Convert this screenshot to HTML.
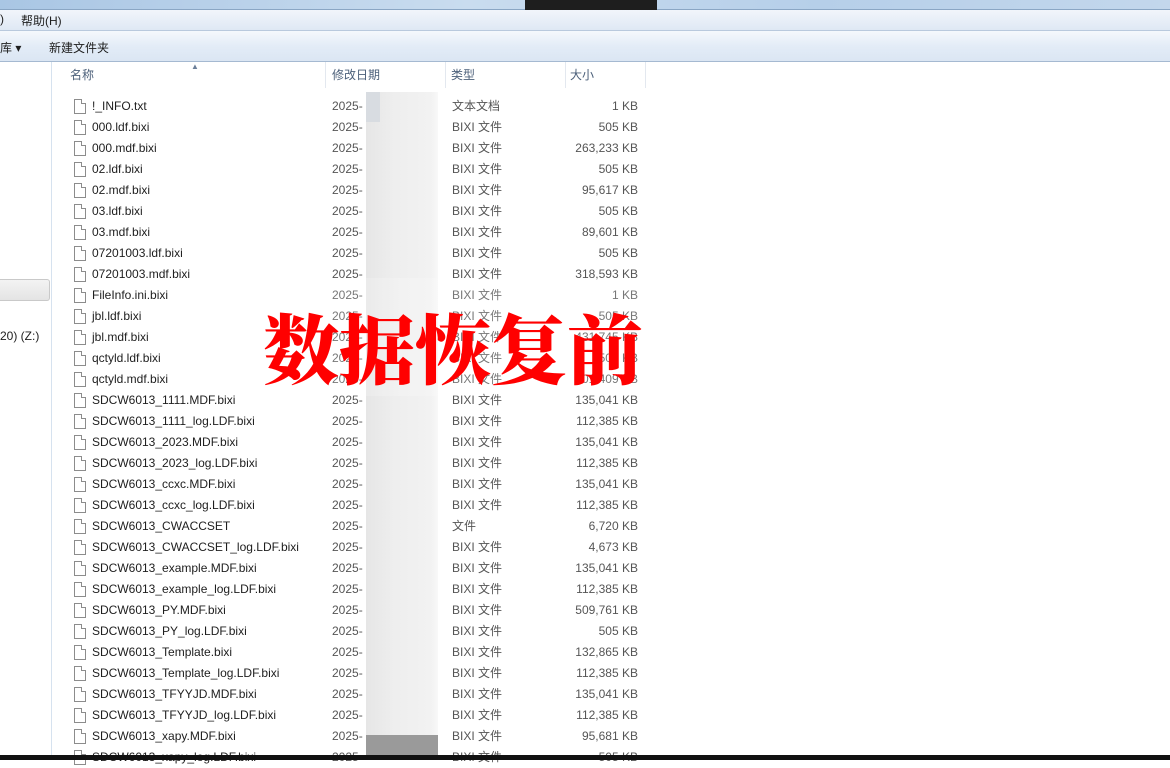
<!DOCTYPE html>
<html><head><meta charset="utf-8"><style>
*{margin:0;padding:0;box-sizing:border-box}
body{width:1170px;height:760px;overflow:hidden;background:#fff;font-family:"Liberation Sans","Noto Sans CJK SC",sans-serif;font-size:12px;color:#1e1e1e;position:relative}
.abs{position:absolute}
.title{left:0;top:0;width:1170px;height:10px;background:linear-gradient(90deg,#a9c6e4,#c9dcef 40%,#b6cfe9 70%,#c3d7ec);border-bottom:1px solid #8aa6c4}
.menu{left:0;top:10px;width:1170px;height:21px;background:linear-gradient(#f1f5fb,#dfe8f4);border-bottom:1px solid #b9c9dd}
.tool{left:0;top:31px;width:1170px;height:31px;background:linear-gradient(#f5f8fc,#e3ecf7 50%,#dbe6f3);border-bottom:1px solid #a5b9d1}
.left{left:0;top:62px;width:52px;height:698px;background:#fff;border-right:1px solid #d6e2ef}
.hdr{top:62px;height:26px;line-height:26px;color:#4c607a;border-right:1px solid #e3e8ef}
.row{left:0;height:21px;line-height:21px;width:1170px}
.row span{position:absolute;white-space:nowrap}
.ic{position:absolute;left:74px;top:3px;width:12px;height:15px;border:1px solid #8c8c8c;background:#fff}
.ic:after{content:"";position:absolute;right:-1px;top:-1px;width:4px;height:4px;background:#fff;border-left:1px solid #8c8c8c;border-bottom:1px solid #8c8c8c}
.gray{color:#555}
</style></head><body>
<div class="abs title"></div>
<div class="abs" style="left:525px;top:0;width:132px;height:14px;background:#1e1e1e"></div>
<div class="abs menu"><span class="abs" style="left:0;top:2px">)</span><span class="abs" style="left:21px;top:2px">帮助(H)</span></div>
<div class="abs tool"><span class="abs" style="left:0;top:8px">库 ▾</span><span class="abs" style="left:49px;top:8px">新建文件夹</span></div>
<div class="abs left">
<div class="abs" style="left:0;top:217px;width:50px;height:22px;background:linear-gradient(#f3f3f3,#e4e4e4);border:1px solid #c9c9c9;border-left:none;border-radius:0 3px 3px 0"></div>
<span class="abs" style="left:0;top:267px">20) (Z:)</span>
</div>
<div class="abs hdr" style="left:53px;width:273px;padding-left:17px">名称</div>
<div class="abs" style="left:191px;top:62px;font-size:8px;color:#6b7f99">▲</div>
<div class="abs hdr" style="left:326px;width:120px;padding-left:6px">修改日期</div>
<div class="abs hdr" style="left:446px;width:120px;padding-left:5px">类型</div>
<div class="abs hdr" style="left:566px;width:80px;padding-left:4px">大小</div>
<div class="abs" style="left:366px;top:92px;width:72px;height:643px;background:linear-gradient(90deg,#e6e6e6,#eeeeee 40%,#f2f2f2 90%,#f8f8f8)"></div>
<div class="abs" style="left:366px;top:92px;width:14px;height:30px;background:#d8dce1"></div>
<div class="abs" style="left:366px;top:735px;width:72px;height:25px;background:#9a9a9a"></div>
<div id="rows"></div>
<div class="abs" style="left:248px;top:278px;width:412px;height:118px;background:rgba(255,255,255,0.2)"></div>
<div class="abs" style="left:263px;top:296px;font-family:'Noto Serif CJK SC',serif;font-weight:900;font-size:76px;line-height:100px;color:#ff0000">数据恢复前</div>
<div class="abs" style="left:0;top:755px;width:1170px;height:5px;background:#111"></div>
<script>
var d=[["!_INFO.txt","文本文档","1 KB"],["000.ldf.bixi","","505 KB"],["000.mdf.bixi","","263,233 KB"],["02.ldf.bixi","","505 KB"],["02.mdf.bixi","","95,617 KB"],["03.ldf.bixi","","505 KB"],["03.mdf.bixi","","89,601 KB"],["07201003.ldf.bixi","","505 KB"],["07201003.mdf.bixi","","318,593 KB"],["FileInfo.ini.bixi","","1 KB"],["jbl.ldf.bixi","","505 KB"],["jbl.mdf.bixi","","431,745 KB"],["qctyld.ldf.bixi","","505 KB"],["qctyld.mdf.bixi","","201,409 KB"],["SDCW6013_1111.MDF.bixi","","135,041 KB"],["SDCW6013_1111_log.LDF.bixi","","112,385 KB"],["SDCW6013_2023.MDF.bixi","","135,041 KB"],["SDCW6013_2023_log.LDF.bixi","","112,385 KB"],["SDCW6013_ccxc.MDF.bixi","","135,041 KB"],["SDCW6013_ccxc_log.LDF.bixi","","112,385 KB"],["SDCW6013_CWACCSET","文件","6,720 KB"],["SDCW6013_CWACCSET_log.LDF.bixi","","4,673 KB"],["SDCW6013_example.MDF.bixi","","135,041 KB"],["SDCW6013_example_log.LDF.bixi","","112,385 KB"],["SDCW6013_PY.MDF.bixi","","509,761 KB"],["SDCW6013_PY_log.LDF.bixi","","505 KB"],["SDCW6013_Template.bixi","","132,865 KB"],["SDCW6013_Template_log.LDF.bixi","","112,385 KB"],["SDCW6013_TFYYJD.MDF.bixi","","135,041 KB"],["SDCW6013_TFYYJD_log.LDF.bixi","","112,385 KB"],["SDCW6013_xapy.MDF.bixi","","95,681 KB"],["SDCW6013_xapy_log.LDF.bixi","","505 KB"]];
var h="";d.forEach(function(r,i){var t=96+i*21;h+='<div class="abs row" style="top:'+t+'px"><div class="ic"></div><span style="left:92px">'+r[0]+'</span><span class="gray" style="left:332px">2025-</span><span class="gray" style="left:452px">'+(r[1]||"BIXI 文件")+'</span><span class="gray" style="right:532px">'+r[2]+'</span></div>';});
document.getElementById("rows").innerHTML=h;
</script>
</body></html>
